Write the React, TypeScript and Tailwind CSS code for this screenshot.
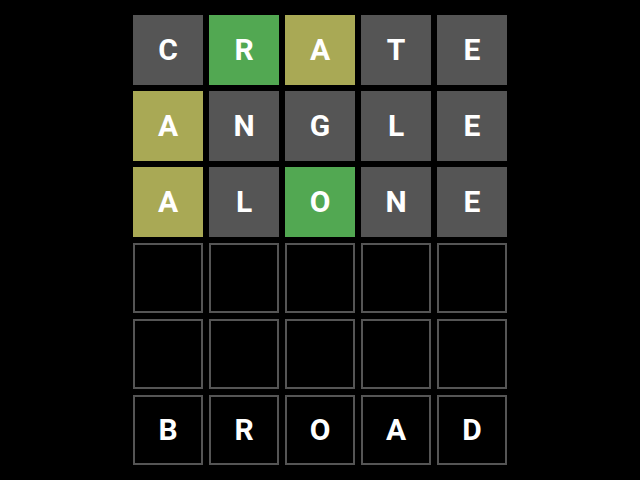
import React from 'react';

type Cell = { letter: string; state: 'gray' | 'green' | 'yellow' | 'empty' | 'typed' };

const rows: Cell[][] = [
    [
        { letter: 'C', state: 'gray' },
        { letter: 'R', state: 'green' },
        { letter: 'A', state: 'yellow' },
        { letter: 'T', state: 'gray' },
        { letter: 'E', state: 'gray' },
    ],
    [
        { letter: 'A', state: 'yellow' },
        { letter: 'N', state: 'gray' },
        { letter: 'G', state: 'gray' },
        { letter: 'L', state: 'gray' },
        { letter: 'E', state: 'gray' },
    ],
    [
        { letter: 'A', state: 'yellow' },
        { letter: 'L', state: 'gray' },
        { letter: 'O', state: 'green' },
        { letter: 'N', state: 'gray' },
        { letter: 'E', state: 'gray' },
    ],
    Array.from({ length: 5 }, () => ({ letter: '', state: 'empty' as const })),
    Array.from({ length: 5 }, () => ({ letter: '', state: 'empty' as const })),
    'BROAD'.split('').map(l => ({ letter: l, state: 'typed' as const })),
];

const stateClass = {
    gray: 'bg-[#555555]',
    green: 'bg-[#52a852]',
    yellow: 'bg-[#a9a955]',
    empty: 'border-2 border-[#555555]',
    typed: 'border-2 border-[#555555]',
};

export default function App() {
    return (
        <div className="w-[640px] h-[480px] bg-black flex justify-center pt-[15px] font-['Roboto',sans-serif]">
            <div className="grid grid-cols-5 gap-[6px] w-[374px] h-fit">
                {rows.map((row, r) =>
                    row.map((cell, c) => (
                        <div
                            key={r + '-' + c}
                            className={"w-[70px] h-[70px] flex items-center justify-center text-white font-bold text-[30px] leading-none " + stateClass[cell.state]}
                        >
                            {cell.letter}
                        </div>
                    ))
                )}
            </div>
        </div>
    );
}
